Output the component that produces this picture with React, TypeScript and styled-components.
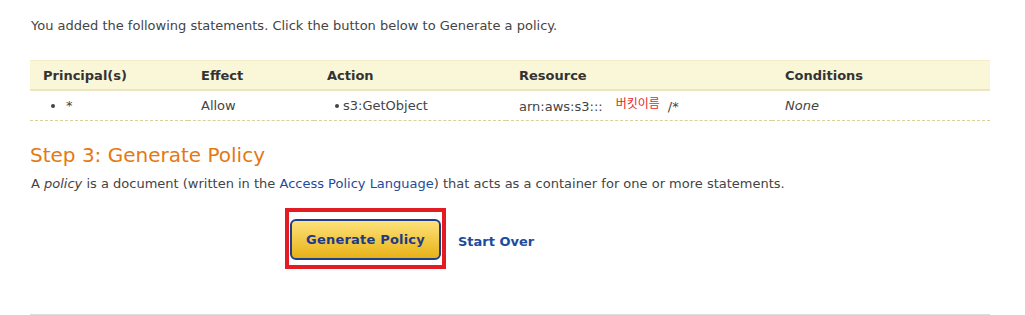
import React from 'react';
import styled, { createGlobalStyle } from 'styled-components';

const GlobalStyle = createGlobalStyle`
  html, body {
    margin: 0;
    padding: 0;
    background: #fff;
  }
  body {
    font-family: "DejaVu Sans", Verdana, sans-serif;
    font-size: 13px;
    color: #444;
  }
`;

const Page = styled.div`
  width: 960px;
  margin-left: 30px;
  padding-top: 17px;
  border-bottom: 1px solid #ddd;
  height: 297px;
`;

const Intro = styled.p`
  margin: 0 0 26px 1px;
  line-height: 17px;
`;

const Table = styled.table`
  width: 100%;
  border-collapse: collapse;
  table-layout: fixed;
`;

const HeadRow = styled.tr`
  background: #faf7d8;
  border-top: 1px solid #f1edc6;
  border-bottom: 2px solid #ebe6bf;
`;

const Th = styled.th<{ $w: number }>`
  width: ${p => p.$w - 13}px;
  text-align: left;
  font-weight: bold;
  color: #333;
  height: 28px;
  padding: 0 0 0 13px;
`;

const BodyRow = styled.tr`
  border-bottom: 1px dashed #d6d19a;
`;

const Td = styled.td<{ $italic?: boolean }>`
  height: 29px;
  padding: 0 0 0 13px;
  font-style: ${p => (p.$italic ? 'italic' : 'normal')};
  color: #444;
  white-space: nowrap;
`;

const Bullet = styled.span<{ $gap: number }>`
  display: inline-block;
  width: 4px;
  height: 4px;
  border-radius: 50%;
  background: #444;
  margin: 0 ${p => p.$gap}px 2px 8px;
  vertical-align: middle;
`;

const Bucket = styled.span`
  color: #e8262a;
  font-size: 12px;
  font-family: "Noto Sans CJK KR", sans-serif;
  margin: 0 8px 0 13px;
  position: relative;
  top: -3px;
`;

const StepTitle = styled.h2`
  margin: 22px 0 0 0;
  font-size: 20px;
  font-weight: normal;
  color: #e47911;
  line-height: 24px;
`;

const Desc = styled.p`
  margin: 8px 0 0 1px;
  line-height: 18px;
`;

const Link = styled.a`
  color: #1e4b9b;
  text-decoration: none;
`;

const Actions = styled.div`
  display: flex;
  align-items: center;
  gap: 12px;
  margin: 15px 0 0 255px;
`;

const Highlight = styled.div`
  border: 4px solid #e31c24;
  padding: 7px 1px 5px 1px;
  width: 151px;
  height: 41px;
  box-sizing: content-box;
`;

const GenerateButton = styled.button`
  display: block;
  width: 151px;
  height: 41px;
  padding: 0;
  border: 2px solid #1f3f8a;
  border-radius: 6px;
  background: linear-gradient(#fde27a, #e8b217);
  color: #1e3a86;
  font-family: "DejaVu Sans", Verdana, sans-serif;
  font-size: 13px;
  font-weight: bold;
  letter-spacing: 0.2px;
  cursor: pointer;
`;

const StartOver = styled.a`
  color: #1e4b9b;
  font-weight: bold;
  font-size: 13px;
  text-decoration: none;
  margin-top: 6px;
`;

const columns = [
  { label: 'Principal(s)', w: 158 },
  { label: 'Effect', w: 126 },
  { label: 'Action', w: 192 },
  { label: 'Resource', w: 266 },
  { label: 'Conditions', w: 218 },
];

export default function App() {
  return (
    <>
      <GlobalStyle />
      <Page>
        <Intro>You added the following statements. Click the button below to Generate a policy.</Intro>
        <Table>
          <thead>
            <HeadRow>
              {columns.map(c => (
                <Th key={c.label} $w={c.w}>{c.label}</Th>
              ))}
            </HeadRow>
          </thead>
          <tbody>
            <BodyRow>
              <Td><Bullet $gap={11} />*</Td>
              <Td>Allow</Td>
              <Td><Bullet $gap={4} />s3:GetObject</Td>
              <Td>arn:aws:s3:::<Bucket>버킷이름</Bucket>/*</Td>
              <Td $italic>None</Td>
            </BodyRow>
          </tbody>
        </Table>
        <StepTitle>Step 3: Generate Policy</StepTitle>
        <Desc>
          A <i>policy</i> is a document (written in the <Link href="#">Access Policy Language</Link>) that acts as a container for one or more statements.
        </Desc>
        <Actions>
          <Highlight>
            <GenerateButton>Generate Policy</GenerateButton>
          </Highlight>
          <StartOver href="#">Start Over</StartOver>
        </Actions>
      </Page>
    </>
  );
}
